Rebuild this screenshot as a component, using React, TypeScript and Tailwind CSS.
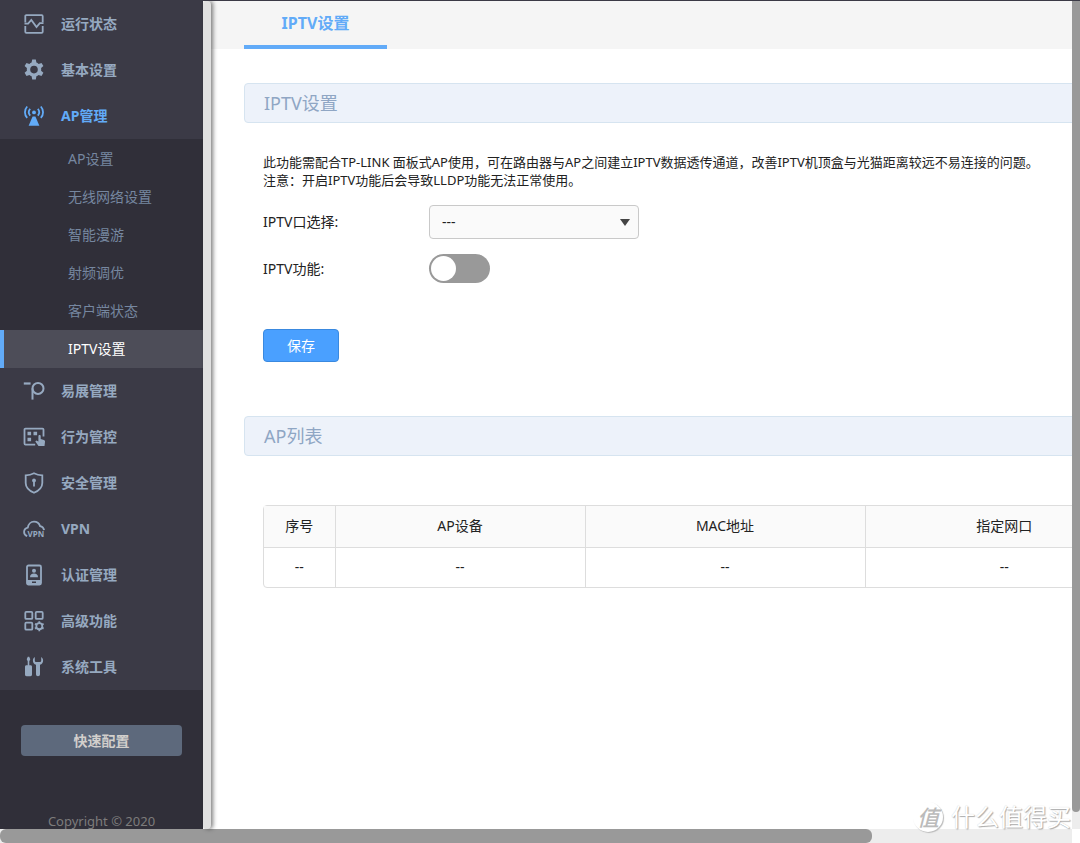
import { useState } from 'react';
import type { ReactNode } from 'react';

interface MenuItem {
  label: string;
  icon: ReactNode;
  children?: string[];
}

function Icon({ children }: { children: ReactNode }) {
  return (
    <svg viewBox="0 0 22 22" className="h-[22px] w-[22px] shrink-0" fill="none" stroke="currentColor" strokeWidth="1.8" aria-hidden="true">
      {children}
    </svg>
  );
}

const StatusIcon = (
  <Icon>
    <path d="M2.3 9.5V3.2a1 1 0 0 1 1-1h15.4a1 1 0 0 1 1 1V9.3M19.7 13v5.8a1 1 0 0 1-1 1H3.3a1 1 0 0 1-1-1V13" />
    <path d="M1.5 10.6h3.6L8.3 7l5.2 7 3.3-3.9h3.7" />
  </Icon>
);

const GearIcon = (
  <Icon>
    <path
      fill="currentColor"
      stroke="none"
      fillRule="evenodd"
      d="M9.2.6h3.6l.6 3a8 8 0 0 1 2.2 1.3l2.9-1 1.9 3.2-2.3 2a8 8 0 0 1 0 2.6l2.3 2-1.9 3.2-2.9-1a8 8 0 0 1-2.2 1.3l-.6 3.2H9.2l-.6-3.2a8 8 0 0 1-2.2-1.3l-2.9 1-1.9-3.2 2.3-2a8 8 0 0 1 0-2.6l-2.3-2 1.9-3.2 2.9 1a8 8 0 0 1 2.2-1.3zM11 6.8a3.8 3.8 0 1 0 0 7.6 3.8 3.8 0 0 0 0-7.6z"
    />
  </Icon>
);

const AntennaIcon = (
  <Icon>
    <path fill="currentColor" stroke="none" d="M9.6 11.4h2.8l4 9.4H5.6z" />
    <circle cx="11" cy="7.4" r="1.9" fill="currentColor" stroke="none" />
    <path d="M4.2 1.5c-3 3.2-3 8.2 0 11.4M17.8 1.5c3 3.2 3 8.2 0 11.4M7.2 3.9c-1.7 1.9-1.7 4.8 0 6.8M14.8 3.9c1.7 1.9 1.7 4.8 0 6.8" />
  </Icon>
);

const MeshIcon = (
  <Icon>
    <path strokeWidth="2.2" d="M.8 3.5h6.8" />
    <path strokeWidth="2" d="M9.5 19.6V8.4" />
    <circle cx="15" cy="8.4" r="5.5" strokeWidth="2" />
  </Icon>
);

const BehaviorIcon = (
  <Icon>
    <path d="M12.2 18.6H2.5a1 1 0 0 1-1-1V3.6a1 1 0 0 1 1-1h17a1 1 0 0 1 1 1v7" />
    <path
      fill="currentColor"
      stroke="none"
      d="M4.5 5.7h3.6v3.6H4.5zM10.5 5.7h3.6v3.6h-3.6zM4.5 11.7h3.6v3.6H4.5zM16.6 9c.7 0 1.1.5 1.1 1.2v2.9l3.2.9c.9.3 1.2.9 1.1 1.7l-.5 4.2h-6l-3.2-4.4 1-1 2.100 1V10.200c0-.7.5-1.200 1.200-1.200z"
    />
  </Icon>
);

const ShieldIcon = (
  <Icon>
    <path d="M11 1.200c2.600 1.400 5.200 2 8.300 2.100v7.600c0 4.500-3.300 7.600-8.300 9.900-5-2.300-8.300-5.400-8.300-9.900V3.300c3.100-.1 5.700-.7 8.300-2.100z" />
    <circle cx="11" cy="8.400" r="1.900" fill="currentColor" stroke="none" />
    <path d="M11 9v5.600" />
  </Icon>
);

const VpnIcon = (
  <Icon>
    <path d="M4.200 18.200c-1.900-.7-3.100-2.200-3.100-4.200 0-2.300 1.600-4 3.700-4.400C5.300 6.200 7.900 3.700 11 3.700c3 0 5.200 1.800 6.100 4.400 2.100.4 3.600 2 4 4" />
    <text x="4.600" y="18.800" fontSize="8" fontWeight="700" fill="currentColor" stroke="none" className="font-['Noto_Sans',sans-serif]">
      VPN
    </text>
  </Icon>
);

const AuthIcon = (
  <Icon>
    <rect x="4" y="1.500" width="14" height="19" rx="1.500" />
    <path fill="currentColor" stroke="none" fillRule="evenodd" d="M4 16h14v4.500H4zM9 17.500v1.500h4v-1.500z" />
    <circle cx="11" cy="6.700" r="2" fill="currentColor" stroke="none" />
    <path fill="currentColor" stroke="none" d="M7 13.200c0-2.500 1.500-3.700 4-3.700s4 1.200 4 3.700z" />
  </Icon>
);

const AdvancedIcon = (
  <Icon>
    <rect x="2.300" y="1.900" width="7" height="7" rx="1" />
    <rect x="12.700" y="1.900" width="7" height="7" rx="1" />
    <rect x="2.300" y="12.700" width="7" height="7" rx="1" />
    <circle cx="16.300" cy="16.200" r="3" />
    <path d="M16.300 11.300v2M16.300 19.200v2M12 13.800l1.800 1M18.800 17.600l1.800 1M12 18.600l1.800-1M18.800 14.800l1.800-1" />
  </Icon>
);

const ToolsIcon = (
  <Icon>
    <path fill="currentColor" stroke="none" d="M4.800.8h1.400l1.100 2.400-1 2v4h1.200c1 0 1.500.6 1.500 1.500v7.800c0 1-.6 1.700-1.600 1.700H3.600c-1 0-1.600-.7-1.600-1.700v-7.800c0-.9.500-1.500 1.500-1.500h1.200v-4l-1-2z" />
    <path fill="currentColor" stroke="none" d="M11.800 1v3.600c0 .9.500 1.500 1.200 1.500h4c.7 0 1.200-.6 1.200-1.500V1c1.200.8 1.900 2 1.900 3.400 0 2.200-1.200 3.700-3.100 4.400v9.400c0 1.200-.8 2-2 2s-2-.8-2-2V8.800c-1.900-.7-3.100-2.200-3.100-4.400 0-1.400.7-2.600 1.900-3.400z" />
  </Icon>
);

const menu: MenuItem[] = [
  { label: '运行状态', icon: StatusIcon },
  { label: '基本设置', icon: GearIcon },
  {
    label: 'AP管理',
    icon: AntennaIcon,
    children: ['AP设置', '无线网络设置', '智能漫游', '射频调优', '客户端状态', 'IPTV设置'],
  },
  { label: '易展管理', icon: MeshIcon },
  { label: '行为管控', icon: BehaviorIcon },
  { label: '安全管理', icon: ShieldIcon },
  { label: 'VPN', icon: VpnIcon },
  { label: '认证管理', icon: AuthIcon },
  { label: '高级功能', icon: AdvancedIcon },
  { label: '系统工具', icon: ToolsIcon },
];

const columns = [
  { title: '序号', width: 'w-[71px]' },
  { title: 'AP设备', width: 'w-[250px]' },
  { title: 'MAC地址', width: 'w-[280px]' },
  { title: '指定网口', width: 'w-[278px]' },
];

function Sidebar({ active, onSelect }: { active: string; onSelect: (label: string) => void }) {
  return (
    <aside className="flex w-[203px] shrink-0 flex-col overflow-hidden bg-[#302f39]">
      <nav className="bg-[#3b3a46] text-[#96a9c0]">
        {menu.map((item) => (
          <div key={item.label}>
            <a
              href="#"
              className={`flex h-[46px] items-center gap-4 pl-[23px] font-bold ${item.children ? 'text-[#62abf8]' : ''}`}
            >
              {item.icon}
              <span>{item.label}</span>
            </a>
            {item.children && (
              <ul className="bg-[#302f39] pt-px text-[#7687a0]">
                {item.children.map((child) => (
                  <li key={child}>
                    <a
                      href="#"
                      onClick={() => onSelect(child)}
                      className={`flex h-[38px] items-center border-l-4 pl-16 ${
                        child === active ? 'border-[#62abf8] bg-[#4d4d58] text-white' : 'border-transparent'
                      }`}
                    >
                      {child}
                    </a>
                  </li>
                ))}
              </ul>
            )}
          </div>
        ))}
      </nav>

      <button className="mx-[21px] mt-[35px] h-[31px] shrink-0 rounded bg-[#5d697c] font-bold text-[#d2cfcc]">
        快速配置
      </button>
      <p className="mt-[57px] shrink-0 text-center text-[13px] leading-4 text-[#7d7c7c]">Copyright © 2020</p>
    </aside>
  );
}

function SectionTitle({ children }: { children: ReactNode }) {
  return (
    <h2 className="flex h-10 items-center rounded border border-[#d6e4f0] bg-[#edf2fa] pl-[19px] text-lg text-[#8fa6c4]">
      {children}
    </h2>
  );
}

export default function App() {
  const [active, setActive] = useState('IPTV设置');
  const [enabled, setEnabled] = useState(false);

  return (
    <div className="relative flex h-screen flex-col overflow-hidden border-t border-[#3b3a46] bg-white font-['Noto_Sans','Noto_Sans_CJK_SC',sans-serif] text-sm text-[#222]">
      <div className="flex min-h-0 flex-1">
        <Sidebar active={active} onSelect={setActive} />

        {/* Sidebar scroll thumb */}
        <div className="z-10 w-2 shrink-0 rounded bg-[#e0e0e0] shadow-[2px_0_4px_0px_rgba(0,0,0,0.5)]" />

        <main className="min-w-0 flex-1 overflow-hidden">
          <div className="min-w-[1080px]">
            <div className="flex h-12 bg-[#f5f5f5] pl-[33px]">
              <button className="w-[143px] border-b-4 border-[#62abf8] text-base font-bold text-[#62abf8]">IPTV设置</button>
            </div>

            <div className="pt-[34px] pl-[33px]">
              <SectionTitle>IPTV设置</SectionTitle>

              <form className="pt-[30px] pl-[19px]" onSubmit={(e) => e.preventDefault()}>
                <p className="text-[13px] leading-[18px] whitespace-nowrap">
                  此功能需配合TP-LINK 面板式AP使用，可在路由器与AP之间建立IPTV数据透传通道，改善IPTV机顶盒与光猫距离较远不易连接的问题。
                  <br />
                  注意：开启IPTV功能后会导致LLDP功能无法正常使用。
                </p>

                <div className="mt-4 flex items-center">
                  <label htmlFor="iptv-port" className="w-[166px]">
                    IPTV口选择:
                  </label>
                  <div className="relative">
                    <select
                      id="iptv-port"
                      className="block h-[34px] w-[210px] appearance-none rounded border border-[#c9c9c9] bg-[#fafafa] px-3"
                    >
                      <option>---</option>
                    </select>
                    <svg viewBox="0 0 10 7" className="pointer-events-none absolute top-[14px] right-[9px] h-[7px] w-[10px]" aria-hidden="true">
                      <path d="M0 0h10L5 7z" fill="#444" />
                    </svg>
                  </div>
                </div>

                <div className="mt-[15px] flex items-center">
                  <label htmlFor="iptv-enable" className="w-[166px]">
                    IPTV功能:
                  </label>
                  <input
                    id="iptv-enable"
                    type="checkbox"
                    role="switch"
                    checked={enabled}
                    onChange={(e) => setEnabled(e.target.checked)}
                    className="flex h-[29px] w-[61px] appearance-none items-center rounded-full bg-[#999] px-[2px] before:size-[25px] before:rounded-full before:bg-white checked:justify-end checked:bg-[#4aa0ff]"
                  />
                </div>

                <button className="mt-[46px] block h-[33px] w-[76px] rounded border border-[#3a89df] bg-[#4aa0ff] text-white">
                  保存
                </button>
              </form>

              <div className="mt-[54px]">
                <SectionTitle>AP列表</SectionTitle>
              </div>

              <div className="mt-[49px] ml-[19px] w-[880px] rounded-sm border border-[#ddd]">
                <table className="w-full table-fixed border-collapse text-center">
                  <thead className="bg-[#fafafa]">
                    <tr className="h-[41px]">
                      {columns.map((col) => (
                        <th key={col.title} className={`border-r border-b border-[#ddd] font-normal last:border-r-0 ${col.width}`}>
                          {col.title}
                        </th>
                      ))}
                    </tr>
                  </thead>
                  <tbody>
                    <tr className="h-10">
                      {columns.map((col) => (
                        <td key={col.title} className="border-r border-[#ddd] last:border-r-0">
                          --
                        </td>
                      ))}
                    </tr>
                  </tbody>
                </table>
              </div>
            </div>
          </div>
        </main>

        {/* Page vertical scrollbar */}
        <div className="flex w-2 shrink-0 flex-col bg-[#ededed]">
          <div className="h-[98%] rounded-b bg-[#999]" />
        </div>
      </div>

      {/* Page horizontal scrollbar */}
      <div className="mr-2 h-[14px] shrink-0 bg-[#ededed]">
        <div className="h-full w-[81.3%] rounded-md bg-[#999]" />
      </div>

      {/* Watermark */}
      <div className="pointer-events-none absolute right-[9px] bottom-[11px] flex items-center gap-2">
        <span className="flex size-[30px] items-center justify-center rounded-full bg-white text-[22px] leading-none font-medium text-[#bbb] italic shadow-[1px_1px_1px_#bbb]">
          值
        </span>
        <span className="text-2xl leading-[30px] text-white [text-shadow:1px_1px_1px_#aaa,0_0_1px_#ccc]">什么值得买</span>
      </div>
    </div>
  );
}
